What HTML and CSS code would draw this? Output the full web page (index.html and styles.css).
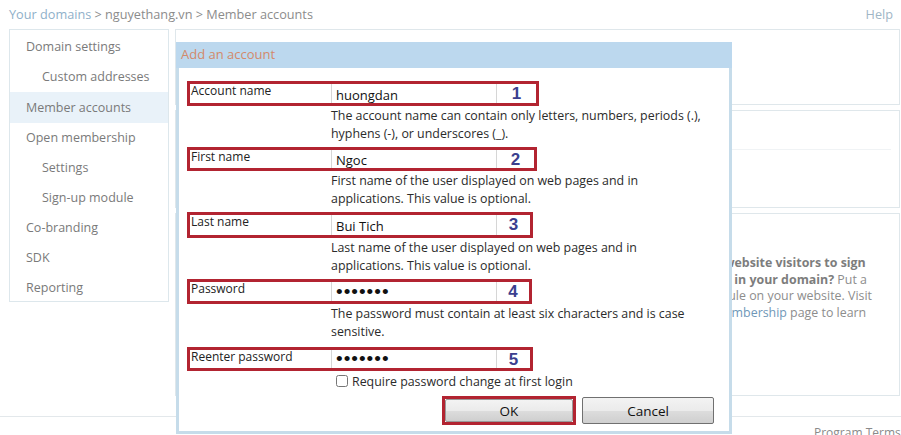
FILE: index.html
```html
<!DOCTYPE html>
<html>
  <head>
    <title>Member accounts</title>
    <link rel="stylesheet" href="styles.css">
  </head>
  <body>
    <div class="topbar">
      <div class="crumbs">
        <a class="crumb-link">Your domains</a> &gt; nguyethang.vn &gt; Member accounts
      </div>
      <a class="help">Help</a>
    </div>

    <div class="layout">
      <ul class="sidenav">
        <li>Domain settings</li>
        <li class="sub">Custom addresses</li>
        <li class="active">Member accounts</li>
        <li>Open membership</li>
        <li class="sub">Settings</li>
        <li class="sub">Sign-up module</li>
        <li>Co-branding</li>
        <li>SDK</li>
        <li>Reporting</li>
      </ul>

      <div class="main">
        <div class="panel panel-top"></div>
        <div class="panel panel-mid">
          <div class="panel-rule"></div>
        </div>
        <div class="panel panel-info">
          <p class="promo">
            <b>Want your website visitors to sign<br>up for email in your domain?</b> Put a<br>sign-up module on your website. Visit<br>the Open <a class="promo-link">membership</a> page to learn<br>more.
          </p>
        </div>
      </div>
    </div>

    <div class="footer">
      <span>Program Terms</span>
    </div>

    <!-- modal dialog -->
    <div class="dialog">
      <div class="dialog-head">Add an account</div>
      <form class="dialog-body">
        <div class="field">
          <div class="mark mark-1">
            <label>Account name</label>
            <input type="text" value="huongdan">
            <span class="num">1</span>
          </div>
          <p class="hint">The account name can contain only letters, numbers, periods (.),<br>hyphens (-), or underscores (_).</p>
        </div>

        <div class="field">
          <div class="mark mark-2">
            <label>First name</label>
            <input type="text" value="Ngoc">
            <span class="num">2</span>
          </div>
          <p class="hint">First name of the user displayed on web pages and in<br>applications. This value is optional.</p>
        </div>

        <div class="field">
          <div class="mark mark-3">
            <label>Last name</label>
            <input type="text" value="Bui Tich">
            <span class="num">3</span>
          </div>
          <p class="hint">Last name of the user displayed on web pages and in<br>applications. This value is optional.</p>
        </div>

        <div class="field">
          <div class="mark mark-4">
            <label>Password</label>
            <input type="password" value="1234567">
            <span class="num">4</span>
          </div>
          <p class="hint">The password must contain at least six characters and is case<br>sensitive.</p>
        </div>

        <div class="field field-last">
          <div class="mark mark-5">
            <label>Reenter password</label>
            <input type="password" value="1234567">
            <span class="num">5</span>
          </div>
        </div>

        <label class="check">
          <input type="checkbox">
          Require password change at first login
        </label>

        <div class="actions">
          <span class="ok-mark"><button type="button">OK</button></span>
          <button type="button">Cancel</button>
        </div>
      </form>
    </div>
  </body>
</html>
```

FILE: styles.css
```css
* {
  box-sizing: border-box;
  margin: 0;
  padding: 0;
}

body {
  width: 901px;
  height: 435px;
  overflow: hidden;
  position: relative;
  background: #fff;
  font-family: 'Open Sans', 'Noto Sans', sans-serif;
  color: #333;
}

a {
  text-decoration: none;
}

/* page behind the dialog */

.topbar {
  display: flex;
  justify-content: space-between;
  align-items: center;
  height: 29px;
  padding: 0 8px 2px 9px;
  font-size: 12.7px;
  color: #8c8c8c;
}

.crumb-link {
  color: #8fb0c9;
}

.help {
  color: #9fb6c6;
}

.layout {
  display: flex;
  gap: 6px;
  padding-left: 9px;
}

.sidenav {
  list-style: none;
  width: 160px;
  height: 273px;
  padding-top: 2px;
  border: 1px solid #dde7ec;
  font-size: 12.5px;
  color: #7a7a7a;
}

.sidenav li {
  height: 30px;
  line-height: 30px;
  padding-left: 16px;
}

.sidenav li.sub {
  padding-left: 32px;
}

.sidenav li.active {
  background: #e9f2f9;
  height: 31px;
  line-height: 31px;
}

.main {
  display: flex;
  flex-direction: column;
  gap: 5px;
  width: 725px;
}

.panel {
  border: 1px solid #dfe7eb;
}

.panel-top {
  height: 76px;
}

.panel-mid {
  height: 98px;
  padding-top: 38px;
}

.panel-rule {
  border-top: 1px solid #f0f3f5;
  margin: 0 8px;
}

.panel-info {
  height: 183px;
  padding: 41px 0 0 480px;
}

.promo {
  font-size: 12.4px;
  line-height: 16.5px;
  color: #8d8d8d;
  white-space: nowrap;
}

.promo b {
  color: #7d7d7d;
}

.promo-link {
  color: #6f97b8;
}

.footer {
  margin-top: 20px;
  border-top: 1px solid #e3e8eb;
  height: 40px;
  padding: 7px 0 0 814px;
  font-size: 12px;
  color: #8a8a8a;
  white-space: nowrap;
}

/* dialog */

.dialog {
  position: absolute;
  left: 176px;
  top: 42px;
  width: 556px;
  height: 392px;
  background: #fff;
  border: 3px solid #c6dcea;
  border-top: 0;
}

.dialog-head {
  height: 26px;
  margin: 0 -3px;
  padding: 3px 0 0 5px;
  background: #bcd8ee;
  font-size: 13px;
  color: #d3896a;
}

.dialog-body {
  padding: 13px 15px 0 8px;
  font-family: 'Open Sans', 'Noto Sans', sans-serif;
  font-size: 12.4px;
  color: #2b2b2b;
}

.mark {
  display: flex;
  align-items: stretch;
  height: 25px;
  border: 3px solid #b22431;
}

.mark-1 { width: 352px; }
.mark-2 { width: 350px; height: 24px; }
.mark-3 { width: 346px; height: 26px; }
.mark-4 { width: 345px; }
.mark-5 { width: 346px; height: 24px; }

.mark label {
  width: 141px;
  padding: 0 0 0 1px;
  font-size: 12px;
  line-height: 14px;
  color: #222;
}

.mark input {
  width: 166px;
  height: 100%;
  padding: 2px 4px 0;
  border: 0;
  border-left: 1px solid #d6d6d6;
  border-right: 1px solid #d6d6d6;
  font-family: 'Open Sans', 'Noto Sans', sans-serif;
  font-size: 13px;
  color: #111;
  background: #fff;
  outline: none;
}

.mark input[type="password"] {
  font-family: 'Liberation Sans', sans-serif;
  font-size: 19px;
  letter-spacing: 1px;
  padding-top: 0;
}

.num {
  flex: 1;
  text-align: center;
  font-family: 'Liberation Sans', sans-serif;
  font-weight: bold;
  font-size: 17px;
  line-height: 20px;
  color: #3b3f8f;
}

.hint {
  margin: 1px 0 4px 144px;
  line-height: 18px;
}

.field-last {
  margin-top: 6px;
}

.check {
  display: flex;
  align-items: center;
  gap: 4px;
  margin: 1px 0 0 149px;
  height: 18px;
  color: #2b2b2b;
}

.check input {
  width: 12px;
  height: 12px;
  margin: 0;
}

.actions {
  display: flex;
  justify-content: flex-end;
  align-items: center;
  gap: 6px;
  margin-top: 6px;
}

.actions button {
  width: 132px;
  height: 27px;
  border: 1px solid #707070;
  border-radius: 2px;
  background: linear-gradient(#f3f3f3 0%, #ebebeb 50%, #dddddd 51%, #cfcfcf 100%);
  font-family: 'Open Sans', 'Noto Sans', sans-serif;
  font-size: 13.5px;
  color: #111;
}

.ok-mark {
  display: flex;
  border: 3px solid #b22431;
}

.ok-mark button {
  width: 128px;
  height: 23px;
  border-color: #9a9a9a;
}
```
